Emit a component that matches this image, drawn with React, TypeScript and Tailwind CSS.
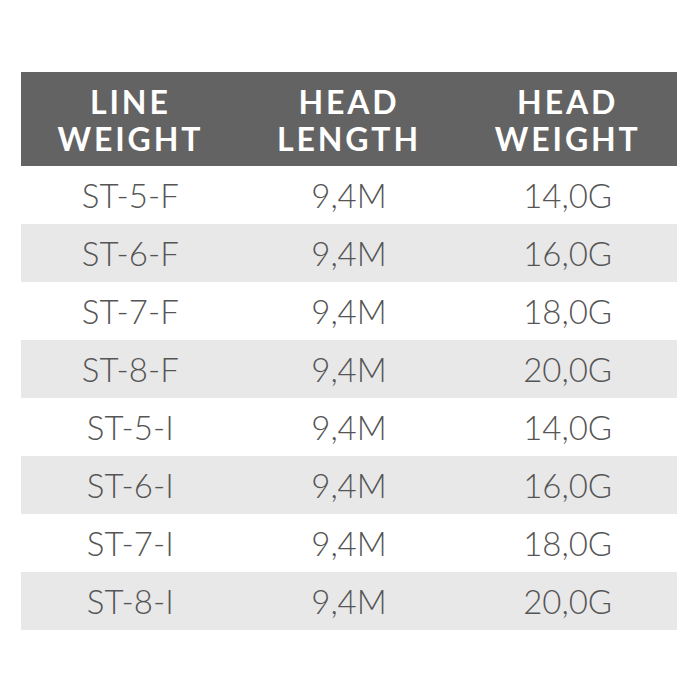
const ROWS = [
  ['ST-5-F', '9,4M', '14,0G'],
  ['ST-6-F', '9,4M', '16,0G'],
  ['ST-7-F', '9,4M', '18,0G'],
  ['ST-8-F', '9,4M', '20,0G'],
  ['ST-5-I', '9,4M', '14,0G'],
  ['ST-6-I', '9,4M', '16,0G'],
  ['ST-7-I', '9,4M', '18,0G'],
  ['ST-8-I', '9,4M', '20,0G'],
]

const HEADS = [
  ['LINE', 'WEIGHT'],
  ['HEAD', 'LENGTH'],
  ['HEAD', 'WEIGHT'],
]

export default function App() {
  return (
    <div className="w-[700px] h-[700px] bg-white pt-[72px] pl-[21px]" style={{ fontFamily: 'Lato, "Open Sans", sans-serif' }}>
      <div className="w-[656px]">
        <div className="grid grid-cols-3 h-[94px] bg-[#636363] items-center pt-[2px]">
          {HEADS.map((h, i) => (
            <div key={i} className="text-center text-white font-bold text-[32px] leading-[37px] tracking-[0.09em]">
              <div>{h[0]}</div>
              <div>{h[1]}</div>
            </div>
          ))}
        </div>
        {ROWS.map((r, i) => (
          <div key={i} className={`grid grid-cols-3 h-[58px] items-center ${i % 2 === 1 ? 'bg-[#e8e8e8]' : 'bg-white'}`}>
            {r.map((c, j) => (
              <div key={j} className="text-center text-[#555555] font-light text-[33px] leading-none">{c}</div>
            ))}
          </div>
        ))}
      </div>
    </div>
  )
}
